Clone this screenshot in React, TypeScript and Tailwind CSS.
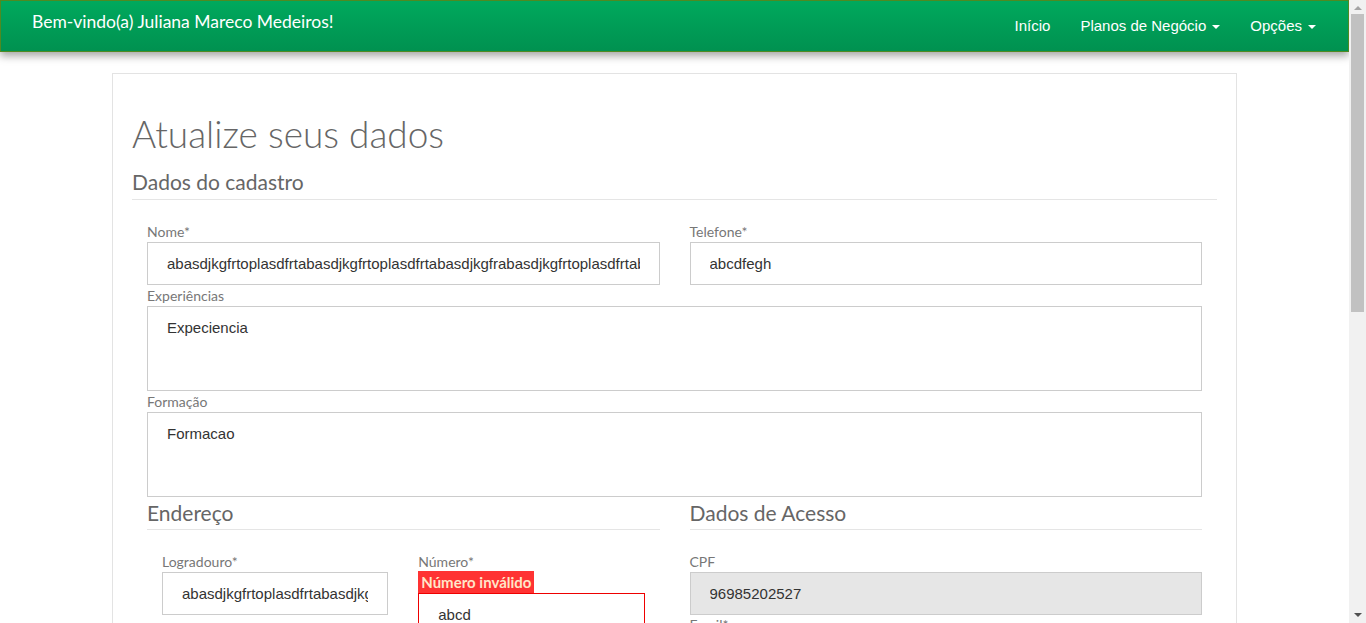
import React from "react";

const sans = { fontFamily: "Lato, 'Open Sans', sans-serif" };

function Caret() {
  return <span className="ml-[6px] inline-block h-0 w-0 border-x-[4px] border-t-[4px] border-x-transparent border-t-white align-middle" />;
}

function Field({ label, value, className = "", disabled = false }: { label: string; value: string; className?: string; disabled?: boolean }) {
  return (
    <div className={className}>
      <label className="block h-[20px] text-[14px] leading-[20px] text-[#777]" style={sans}>
        {label}
      </label>
      <input
        readOnly
        defaultValue={value}
        className={`block h-[43px] w-full border border-[#ccc] pl-[19px] pr-[19px] text-[15px] text-[#333] outline-none font-['Liberation_Sans',Arial,sans-serif] ${disabled ? "bg-[#e6e6e6]" : "bg-white"}`}
      />
    </div>
  );
}

function Area({ label, value }: { label: string; value: string }) {
  return (
    <div>
      <label className="block h-[21px] text-[14px] leading-[21px] text-[#777]" style={sans}>
        {label}
      </label>
      <textarea
        readOnly
        defaultValue={value}
        className="block h-[85px] w-full resize-none border border-[#ccc] bg-white pl-[19px] pt-[10px] text-[15px] text-[#333] outline-none font-['Liberation_Sans',Arial,sans-serif]"
      />
    </div>
  );
}

function SubHeading({ children }: { children: React.ReactNode }) {
  return (
    <h3 className="border-b border-[#e5e5e5] pb-[3px] text-[21px] leading-[26px] text-[#666]" style={sans}>
      {children}
    </h3>
  );
}

export default function App() {
  return (
    <div className="flex h-[623px] overflow-hidden bg-white">
      <div className="min-w-0 flex-1 overflow-hidden">
        <nav className="flex h-[52px] items-center justify-between border border-[#4f8a22] bg-gradient-to-b from-[#00a95d] to-[#009150] pl-[31px] pr-[32px] shadow-[0_4px_8px_rgba(0,0,0,0.35)]">
          <span className="-mt-[7px] text-[17.5px] text-white" style={sans}>
            Bem-vindo(a) Juliana Mareco Medeiros!
          </span>
          <ul className="flex items-center gap-[30px] text-[15px] text-white font-['Liberation_Sans',Arial,sans-serif]">
            <li>Início</li>
            <li>
              Planos de Negócio
              <Caret />
            </li>
            <li>
              Opções
              <Caret />
            </li>
          </ul>
        </nav>

        <div className="mx-auto mt-[21px] w-[1125px] border border-[#e3e3e3] bg-white px-[19px] pb-[40px]">
          <h1 className="mt-[36px] text-[37px] font-light leading-[48px] text-[#666]" style={sans}>
            Atualize seus dados
          </h1>
          <h2 className="mt-[11px] border-b border-[#e5e5e5] pb-[4px] text-[21px] leading-[26px] text-[#666]" style={sans}>
            Dados do cadastro
          </h2>

          <div className="px-[15px] pt-[22px]">
            <div className="grid grid-cols-2 gap-x-[30px]">
              <Field label="Nome*" value="abasdjkgfrtoplasdfrtabasdjkgfrtoplasdfrtabasdjkgfrabasdjkgfrtoplasdfrtabasdjkgfrtoplasdfrt" />
              <Field label="Telefone*" value="abcdfegh" />
            </div>
            <Area label="Experiências" value="Expeciencia" />
            <Area label="Formação" value="Formacao" />

            <div className="mt-[3px] grid grid-cols-2 gap-x-[30px]">
              <div>
                <SubHeading>Endereço</SubHeading>
                <div className="grid grid-cols-2 gap-x-[30px] px-[15px] pt-[22px]">
                  <Field label="Logradouro*" value="abasdjkgfrtoplasdfrtabasdjkgfrtoplasdfrt" />
                  <div>
                    <label className="block h-[19px] text-[14px] leading-[19px] text-[#777]" style={sans}>
                      Número*
                    </label>
                    <span className="block w-fit bg-[#f33] px-[3px] text-[15px] font-bold leading-[22px] text-[#ffe6c8]" style={sans}>
                      Número inválido
                    </span>
                    <input
                      readOnly
                      defaultValue="abcd"
                      className="block h-[43px] w-full border border-[#e00] bg-white pl-[19px] text-[15px] text-[#333] outline-none font-['Liberation_Sans',Arial,sans-serif]"
                    />
                  </div>
                </div>
                <div className="grid grid-cols-2 gap-x-[30px] px-[15px] pt-[6px]">
                  <Field label="Bairro*" value="Centro" />
                  <Field label="CEP*" value="79000000" />
                </div>
              </div>
              <div>
                <SubHeading>Dados de Acesso</SubHeading>
                <div className="pt-[22px]">
                  <Field label="CPF" value="96985202527" disabled />
                  <Field label="Email*" value="juliana@email.com" />
                  <Field label="Senha*" value="" />
                </div>
              </div>
            </div>
          </div>
        </div>
      </div>

      {/* scrollbar */}
      <div className="flex w-[17px] shrink-0 flex-col items-center bg-[#f1f1f1]">
        <div className="mt-[6px] h-0 w-0 border-x-[4px] border-b-[4px] border-x-transparent border-b-[#a3a3a3]" />
        <div className="mt-[4px] h-[298px] w-[13px] bg-[#c1c1c1]" />
        <div className="mb-[6px] mt-auto h-0 w-0 border-x-[4px] border-t-[4px] border-x-transparent border-t-[#505050]" />
      </div>
    </div>
  );
}
